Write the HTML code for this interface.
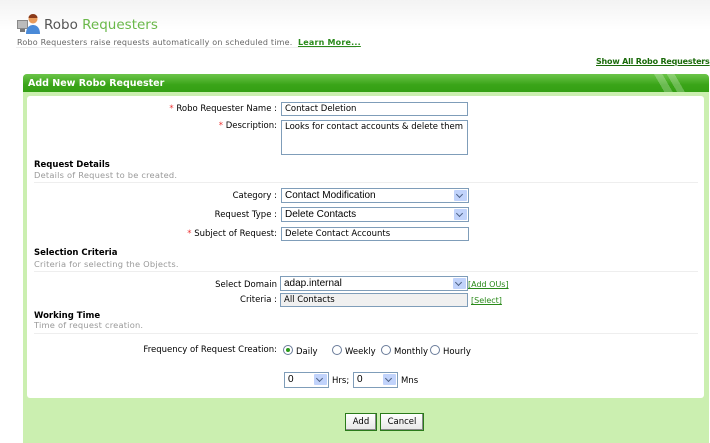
<!DOCTYPE html>
<html><head><meta charset="utf-8"><style>
*{margin:0;padding:0;box-sizing:border-box}
body{width:710px;height:443px;overflow:hidden;background:#fff;font-family:"DejaVu Sans",Verdana,sans-serif;font-size:8.5px;color:#000;position:relative}
.a{position:absolute;white-space:nowrap}
.r{text-align:right}
.st{color:#e33}
.inp{position:absolute;border:1px solid #7f9db9;background:#fff;height:14px;padding:1px 3px;font-size:8.5px;line-height:11px}
.sel{position:absolute;border:1px solid #7f9db9;background:#fff;height:15px;padding:0 3px;font-family:"Liberation Sans",sans-serif;font-size:10px;line-height:13px}
.sel i{position:absolute;right:1px;top:1px;width:13px;height:11px;background:#c1d3fb;border-radius:1px}
.sel i:after{content:"";position:absolute;left:3px;top:2px;width:4px;height:4px;border-right:1.5px solid #4d6185;border-bottom:1.5px solid #4d6185;transform:rotate(45deg)}
.h{font-weight:bold;font-size:8.5px}
.sub{color:#999;font-size:8.3px;letter-spacing:.2px}
.line{position:absolute;left:34px;width:664px;height:1px;background:#eee}
.lnk{color:#2a8a1a;text-decoration:underline;font-size:8px}
.rad{display:inline-block;width:10px;height:10px;border:1px solid #6a7c9a;border-radius:50%;vertical-align:-1px;margin-right:3px;background:#fff;position:relative}
.rad.on:after{content:"";position:absolute;left:2px;top:2px;width:4px;height:4px;border-radius:50%;background:#2a9a1a}
.btn{position:absolute;border:1px solid #2a7a1a;background:linear-gradient(#fff,#e6e6e6);box-shadow:inset -1px -1px 0 #888;font-size:8.5px;text-align:center;line-height:16px;height:18px}
</style></head><body>
<div class="a" style="left:0;top:0;width:710px;height:60px;background:linear-gradient(#f3f3f3,#fff 30px)"></div>
<svg class="a" style="left:16px;top:13px" width="26" height="22" viewBox="0 0 26 22"><rect x="1" y="7" width="11" height="9" fill="#888"/><rect x="2" y="8" width="9" height="7" fill="#bbb"/><rect x="4" y="16" width="5" height="3" fill="#777"/><circle cx="17" cy="6" r="4.5" fill="#e89a5a"/><path d="M12.5 5a4.5 4 0 0 1 9 0z" fill="#8a3a1a"/><path d="M10 21c0-7 4-9 7-9s7 2 7 9z" fill="#4a8ad8"/></svg>
<div class="a" style="left:44px;top:17px;font-size:13.5px;color:#555;font-family:'DejaVu Sans',sans-serif">Robo <span style="color:#6ab84a">Requesters</span></div>
<div class="a" style="left:17px;top:38px;color:#666;font-size:8px;letter-spacing:.2px">Robo Requesters raise requests automatically on scheduled time. &nbsp;<span class="lnk" style="font-weight:bold">Learn More...</span></div>
<div class="a" style="left:16px;top:47px;width:340px;height:1px;background:#eee"></div>
<div class="a lnk" style="left:596px;top:57px;font-weight:bold;color:#1a6a0a;letter-spacing:-.2px">Show All Robo Requesters</div>
<div class="a" style="left:23px;top:74px;width:686px;height:369px;background:#cbefb0;border-radius:4px 4px 0 0"></div>
<div class="a" style="left:23px;top:74px;width:686px;height:18px;background:linear-gradient(#6cc44a,#3aa418 60%,#34a014);border-radius:4px 4px 0 0"></div>
<div class="a" style="left:645px;top:74px;width:45px;height:18px;background:linear-gradient(60deg,transparent 35%,rgba(255,255,255,.25) 35%,rgba(255,255,255,.25) 50%,transparent 50%,transparent 58%,rgba(255,255,255,.25) 58%,rgba(255,255,255,.25) 72%,transparent 72%)"></div>
<div class="a" style="left:28px;top:78px;color:#fff;font-weight:bold;font-size:9.5px">Add New Robo Requester</div>
<div class="a" style="left:27px;top:96px;width:677px;height:302px;background:#fff;border-radius:3px"></div>

<div class="a r" style="right:433px;top:104px"><span class="st">*</span> Robo Requester Name :</div>
<div class="inp" style="left:281px;top:102px;width:187px">Contact Deletion</div>
<div class="a r" style="right:433px;top:121px"><span class="st">*</span> Description:</div>
<div class="inp" style="left:281px;top:120px;width:187px;height:35px">Looks for contact accounts &amp; delete them</div>

<div class="a h" style="left:34px;top:160px">Request Details</div>
<div class="a sub" style="left:34px;top:170px">Details of Request to be created.</div>
<div class="line" style="top:182px"></div>
<div class="a r" style="right:433px;top:191px">Category :</div>
<div class="sel" style="left:281px;top:188px;width:188px">Contact Modification<i></i></div>
<div class="a r" style="right:433px;top:210px">Request Type :</div>
<div class="sel" style="left:281px;top:207px;width:188px">Delete Contacts<i></i></div>
<div class="a r" style="right:433px;top:229px"><span class="st">*</span> Subject of Request:</div>
<div class="inp" style="left:281px;top:227px;width:188px">Delete Contact Accounts</div>

<div class="a h" style="left:34px;top:248px">Selection Criteria</div>
<div class="a sub" style="left:34px;top:259px">Criteria for selecting the Objects.</div>
<div class="line" style="top:271px"></div>
<div class="a r" style="right:433px;top:280px">Select Domain</div>
<div class="sel" style="left:280px;top:276px;width:188px">adap.internal<i></i></div>
<div class="a lnk" style="left:468px;top:280px">[Add OUs]</div>
<div class="a r" style="right:433px;top:295px">Criteria :</div>
<div class="inp" style="left:280px;top:293px;width:188px;background:#f0f0f0">All Contacts</div>
<div class="a lnk" style="left:471px;top:296px">[Select]</div>

<div class="a h" style="left:34px;top:311px">Working Time</div>
<div class="a sub" style="left:34px;top:320px">Time of request creation.</div>
<div class="line" style="top:333px"></div>
<div class="a r" style="right:433px;top:345px">Frequency of Request Creation:</div>
<div class="a" style="left:283px;top:345px"><span class="rad on"></span>Daily</div>
<div class="a" style="left:332px;top:345px"><span class="rad"></span>Weekly</div>
<div class="a" style="left:381px;top:345px"><span class="rad"></span>Monthly</div>
<div class="a" style="left:430px;top:345px"><span class="rad"></span>Hourly</div>
<div class="sel" style="left:284px;top:372px;width:45px;height:16px">0<i></i></div>
<div class="a" style="left:332px;top:376px">Hrs;</div>
<div class="sel" style="left:353px;top:372px;width:45px;height:16px">0<i></i></div>
<div class="a" style="left:401px;top:376px">Mns</div>

<div class="btn" style="left:345px;top:413px;width:32px">Add</div>
<div class="btn" style="left:380px;top:413px;width:44px">Cancel</div>
</body></html>
